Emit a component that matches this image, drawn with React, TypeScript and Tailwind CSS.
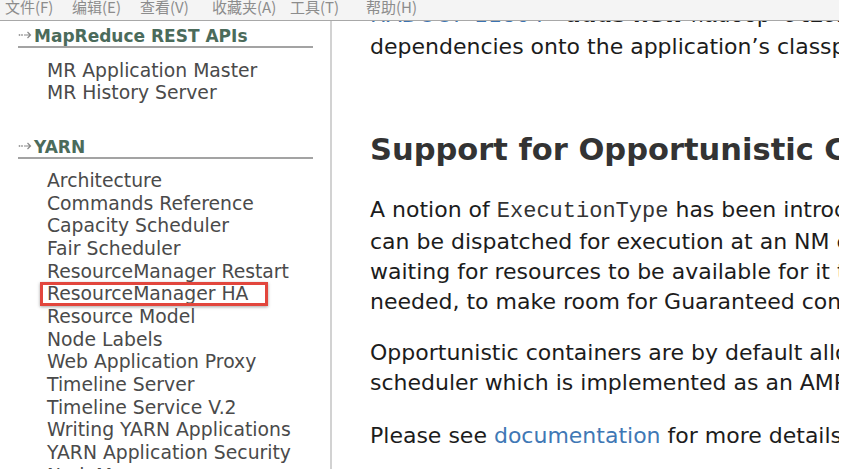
import React from "react";

const menus = [
  { label: "文件(F)", w: "w-[67px]" },
  { label: "编辑(E)", w: "w-[68px]" },
  { label: "查看(V)", w: "w-[72px]" },
  { label: "收藏夹(A)", w: "w-[78px]" },
  { label: "工具(T)", w: "w-[76px]" },
  { label: "帮助(H)", w: "w-[60px]" },
];

const mrItems = ["MR Application Master", "MR History Server"];

const yarnItems = [
  "Architecture",
  "Commands Reference",
  "Capacity Scheduler",
  "Fair Scheduler",
  "ResourceManager Restart",
  "ResourceManager HA",
  "Resource Model",
  "Node Labels",
  "Web Application Proxy",
  "Timeline Server",
  "Timeline Service V.2",
  "Writing YARN Applications",
  "YARN Application Security",
  "NodeManager",
];

const mono = { fontFamily: '"Liberation Mono", "Courier New", monospace' };

const DottedArrow = () => (
  <svg width="14" height="10" viewBox="0 0 14 10" className="mr-[2px] mb-[6px] shrink-0">
    <circle cx="1.5" cy="5" r="0.9" fill="#9a9a9a" />
    <circle cx="4" cy="5" r="0.9" fill="#9a9a9a" />
    <path d="M6 5h6.5M9.5 2l3 3-3 3" stroke="#8a8a8a" strokeWidth="1.2" fill="none" />
  </svg>
);

const SideHeader = ({ title, className }: { title: string; className?: string }) => (
  <h3
    className={`flex items-end w-[295px] border-b-2 border-[#a3a3a3] text-[17px] font-bold leading-[20px] text-[#4b6b5b] ${className ?? ""}`}
  >
    <DottedArrow />
    {title}
  </h3>
);

export default function App() {
  return (
    <div
      className="relative w-[867px] h-[469px] overflow-hidden bg-white"
      style={{ fontFamily: '"DejaVu Sans", Verdana, sans-serif' }}
    >
      {/* browser menu bar sits over the page */}
      <div
        className="absolute left-0 top-0 z-10 flex h-[21px] w-[839px] items-start border-b border-[#a8a8a8] bg-[#f4f4f4] pl-[5px] text-[15px] leading-[15px] text-[#8c8c8c]"
        style={{ fontFamily: '"Noto Sans CJK SC", "Liberation Sans", sans-serif' }}
      >
        {menus.map((m) => (
          <span key={m.label} className={`${m.w} shrink-0 -mt-[1px] whitespace-nowrap`}>
            {m.label}
          </span>
        ))}
      </div>

      <div className="flex w-[839px] h-full overflow-hidden">
        {/* left nav */}
        <aside className="w-[332px] shrink-0 border-r-2 border-[#d2d2d2] pl-[18px] pt-[26px]">
          <SideHeader title="MapReduce REST APIs" />
          <ul className="mt-[12px] pl-[29px] text-[18.8px] leading-[22px] text-[#4a4a4a]">
            {mrItems.map((i) => (
              <li key={i} className="whitespace-nowrap">
                {i}
              </li>
            ))}
          </ul>
          <SideHeader title="YARN" className="mt-[33px]" />
          <ul className="mt-[11px] pl-[29px] text-[18.8px] leading-[22.67px] text-[#4a4a4a]">
            {yarnItems.map((i) => (
              <li key={i} className="relative whitespace-nowrap">
                {i}
                {i === "ResourceManager HA" && (
                  <div className="absolute left-[-7px] top-[-1px] h-[24px] w-[228px] border-[3px] border-[#e2463d] shadow-[0_1px_3px_rgba(0,0,0,0.35)]" />
                )}
              </li>
            ))}
          </ul>
        </aside>

        {/* main content */}
        <main className="min-w-0 flex-1 overflow-hidden pl-[38px] pt-0 text-[22px] leading-[30px] text-[#1c1c1c]">
          <div className="whitespace-nowrap">
            <a className="text-[#3b73b1]">HADOOP-11804</a> - <b>adds new</b>{" "}
            <code style={mono}>hadoop-client-api</code>
          </div>
          <div className="whitespace-nowrap">dependencies onto the application’s classpath.</div>

          <h2 className="mt-[68px] whitespace-nowrap text-[30.5px] font-bold leading-[40px] text-[#333]">
            Support for Opportunistic Containers
          </h2>

          <div className="mt-[25px] whitespace-nowrap">
            <div>
              A notion of{" "}
              <code className="text-[#333]" style={mono}>
                ExecutionType
              </code>{" "}
              has been introduced, whereby
            </div>
            <div>can be dispatched for execution at an NM even if</div>
            <div>waiting for resources to be available for it to start.</div>
            <div>needed, to make room for Guaranteed containers.</div>
          </div>

          <div className="mt-[21px] whitespace-nowrap">
            <div>Opportunistic containers are by default allocated</div>
            <div>scheduler which is implemented as an AMRMProtocol</div>
          </div>

          <div className="mt-[23px] whitespace-nowrap">
            Please see <a className="text-[#3f78b5]">documentation</a> for more details.
          </div>
        </main>
      </div>
    </div>
  );
}
